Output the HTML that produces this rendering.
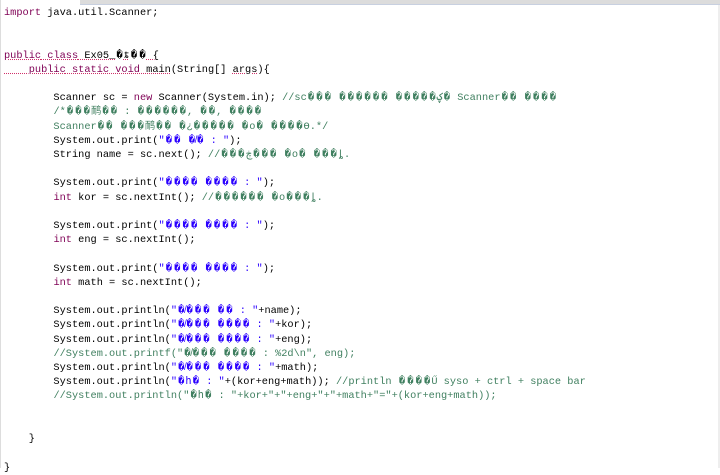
<!DOCTYPE html>
<html><head><meta charset="utf-8"><style>
html,body{margin:0;padding:0;width:720px;height:468px;overflow:hidden;background:#fff}
.top{position:absolute;left:80px;top:0;width:640px;height:4px;background:#dcdcdc;border-bottom:1px solid #c8d0e0}
.rb{position:absolute;right:0;top:5px;width:2px;height:463px;background:#eee}
.lb{position:absolute;left:0;top:0;width:1px;height:468px;background:#ddd}
pre{position:absolute;left:4px;top:6px;margin:0;font-family:"Liberation Mono","DejaVu Sans Mono",monospace;font-size:10.3px;line-height:14.2px;color:#000}
.k{color:#7f0055}.s{color:#2a00ff}.c{color:#3f7f5f}
.u{text-decoration:underline dotted #d0306a}
.r{display:inline-block;width:8.4px;text-align:center;overflow:hidden;vertical-align:bottom}
</style></head><body>
<div class="top"></div><div class="rb"></div><div class="lb"></div>
<pre id="p"><span class="k">import</span> java.util.Scanner;


<span class="u"><span class="k">public</span> <span class="k">class</span> Ex05_�ȶ�� {</span>
<span class="u">    <span class="k">public</span> <span class="k">static</span> <span class="k">void</span> main</span>(String[] <span class="u">args</span>){

        Scanner sc = <span class="k">new</span> Scanner(System.in); <span class="c">//sc��� ������ �����ؼ� Scanner�� ����</span>
        <span class="c">/*���鸸�� : ������, ��, ����</span>
<span class="c">        Scanner�� ���鸸�� �¿����� �о� ����ϴ.*/</span>
        System.out.print(<span class="s">"�� �̸� : "</span>);
        String name = sc.next(); <span class="c">//���ڿ��� �о� ���ȴ.</span>

        System.out.print(<span class="s">"���� ���� : "</span>);
        <span class="k">int</span> kor = sc.nextInt(); <span class="c">//������ �о���ȴ.</span>

        System.out.print(<span class="s">"���� ���� : "</span>);
        <span class="k">int</span> eng = sc.nextInt();

        System.out.print(<span class="s">"���� ���� : "</span>);
        <span class="k">int</span> math = sc.nextInt();

        System.out.println(<span class="s">"�̸��� �� : "</span>+name);
        System.out.println(<span class="s">"�̸��� ���� : "</span>+kor);
        System.out.println(<span class="s">"�̸��� ���� : "</span>+eng);
        <span class="c">//System.out.printf("�̸��� ���� : %2d\n", eng);</span>
        System.out.println(<span class="s">"�̸��� ���� : "</span>+math);
        System.out.println(<span class="s">"�հ� : "</span>+(kor+eng+math)); <span class="c">//println ����Ű syso + ctrl + space bar</span>
        <span class="c">//System.out.println("�հ� : "+kor+"+"+eng+"+"+math+"="+(kor+eng+math));</span>


    }

}</pre>
<script>
var p=document.getElementById('p');
p.innerHTML=p.innerHTML.replace(/\uFFFD/g,'<span class="r">\uFFFD</span>');
</script>
</body></html>
